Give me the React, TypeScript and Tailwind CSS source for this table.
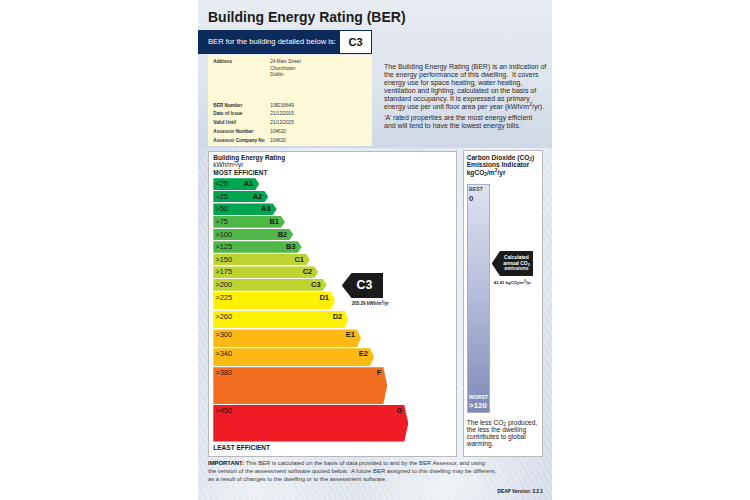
import React from 'react';

type Band = { label: string; code: string; w: number; h: string; bg: string };

const bands: Band[] = [
  { label: '<25', code: 'A1', w: 46, h: 'h-[11.6px]', bg: 'bg-[#00a54f]' },
  { label: '>25', code: 'A2', w: 55, h: 'h-[11.6px]', bg: 'bg-[#00a54f]' },
  { label: '>50', code: 'A3', w: 63.4, h: 'h-[11.6px]', bg: 'bg-[#00a54f]' },
  { label: '>75', code: 'B1', w: 71.7, h: 'h-[11.6px]', bg: 'bg-[#50b848]' },
  { label: '>100', code: 'B2', w: 80, h: 'h-[11.6px]', bg: 'bg-[#50b848]' },
  { label: '>125', code: 'B3', w: 88.4, h: 'h-[11.6px]', bg: 'bg-[#50b848]' },
  { label: '>150', code: 'C1', w: 96.7, h: 'h-[11.6px]', bg: 'bg-[#bdd431]' },
  { label: '>175', code: 'C2', w: 105, h: 'h-[11.6px]', bg: 'bg-[#bdd431]' },
  { label: '>200', code: 'C3', w: 113.4, h: 'h-[11.6px]', bg: 'bg-[#bdd431]' },
  { label: '>225', code: 'D1', w: 121.7, h: 'h-[17.9px]', bg: 'bg-[#fff100]' },
  { label: '>260', code: 'D2', w: 135, h: 'h-[17.9px]', bg: 'bg-[#fff100]' },
  { label: '>300', code: 'E1', w: 147.7, h: 'h-[17.9px]', bg: 'bg-[#fdb913]' },
  { label: '>340', code: 'E2', w: 160.7, h: 'h-[17.9px]', bg: 'bg-[#fdb913]' },
  { label: '>380', code: 'F', w: 174, h: 'h-[36.7px]', bg: 'bg-[#f26f22]' },
  { label: '>450', code: 'G', w: 195, h: 'h-[36.7px]', bg: 'bg-[#ed1c24]' },
];

function Bar({ b }: { b: Band }) {
  return (
    <div
      className={`flex shrink-0 items-start justify-between pl-[2px] pr-[6px] text-[7.5px] leading-[11.6px] text-[#1a1a1a] [clip-path:polygon(0_0,calc(100%_-_4px)_0,100%_50%,calc(100%_-_4px)_100%,0_100%)] ${b.bg} ${b.h}`}
      style={{ width: b.w }}
    >
      <span>{b.label}</span>
      <span className="font-bold">{b.code}</span>
    </div>
  );
}

const infoRows: [string, string][] = [
  ['BER Number', '108216649'],
  ['Date of Issue', '21/12/2015'],
  ['Valid Until', '21/12/2025'],
  ['Assessor Number', '104620'],
  ['Assessor Company No', '104620'],
];

export default function App() {
  return (
    <div className="w-[750px] h-[500px] bg-white flex justify-center font-['Liberation_Sans',Arial,sans-serif] text-[#222]">
      <div className="w-[354px] h-[500px] flex flex-col">
        {/* top section */}
        <div className="h-[148px] flex flex-col [background-image:linear-gradient(180deg,#e7ebf2_0%,#dfe5ee_55%,#cfd8e6_100%)]">
          <h1 className="pl-[10px] pt-[9px] text-[14px] leading-[17px] font-bold text-[#1c1c1c] whitespace-nowrap">
            Building Energy Rating (BER)
          </h1>
          <div className="flex mt-[4px]">
            <div className="w-[174px] flex flex-col">
              <div className="h-[24px] bg-[#0c2b5b] flex items-center justify-between pl-[10px] pr-[1px]">
                <span className="text-white text-[7.6px] whitespace-nowrap">BER for the building detailed below is:</span>
                <div className="w-[31px] h-[22px] bg-white flex items-center justify-center text-[11px] font-bold text-[#111]">
                  C3
                </div>
              </div>
              <div className="ml-[10px] mt-[1px] h-[91px] bg-[#fdf8d6] pl-[5.3px] pt-[4px] text-[4.7px] text-[#333]">
                <div className="flex">
                  <div className="w-[57px] font-bold leading-[6.5px]">Address</div>
                  <div className="leading-[6.5px]">
                    24 Main Street
                    <br />
                    Churchtown
                    <br />
                    Dublin
                  </div>
                </div>
                <div className="mt-[23.1px] flex flex-col">
                  {infoRows.map(([k, v]) => (
                    <div key={k} className="flex leading-[8.75px]">
                      <div className="w-[57px] font-bold whitespace-nowrap">{k}</div>
                      <div>{v}</div>
                    </div>
                  ))}
                </div>
              </div>
            </div>
            <div className="flex-1 pl-[12px] pt-[33px] text-[7px] leading-[8px] text-[#2a2a2a] whitespace-nowrap">
              <p>
                The Building Energy Rating (BER) is an indication of
                <br />
                the energy performance of this dwelling.&nbsp; It covers
                <br />
                energy use for space heating, water heating,
                <br />
                ventilation and lighting, calculated on the basis of
                <br />
                standard occupancy. It is expressed as primary
                <br />
                energy use per unit floor area per year (kWh/m<sup>2</sup>/yr).
              </p>
              <p className="mt-[3px]">
                ‘A’ rated properties are the most energy efficient
                <br />
                and will tend to have the lowest energy bills.
              </p>
            </div>
          </div>
        </div>

        {/* lower section */}
        <div className="flex-1 flex flex-col pl-[10px] pr-[9px] pt-[2px] [background-image:repeating-linear-gradient(62deg,rgba(255,255,255,0.35)_0px,rgba(255,255,255,0.35)_1px,transparent_1px,transparent_5px),linear-gradient(100deg,#d3dae7_0%,#eceff5_28%,#dde3ed_52%,#eef1f6_74%,#d4dbe8_100%)]">
          <div className="flex items-start gap-[6px]">
            {/* energy panel */}
            <div className="w-[249px] h-[305.5px] mt-[1px] bg-white border border-[#b9b9b9] pl-[4.3px] pt-[1.5px] flex flex-col">
              <div className="text-[6.5px] leading-[7.5px] text-[#1a1a1a]">
                <div className="font-bold">Building Energy Rating</div>
                <div>
                  kWh/m<sup>2</sup>/yr
                </div>
                <div className="font-bold">MOST EFFICIENT</div>
              </div>
              <div className="mt-[2.3px] flex flex-col gap-[1px]">
                {bands.map((b) =>
                  b.code === 'C3' ? (
                    <div key={b.code} className="flex items-start h-[11.6px]">
                      <Bar b={b} />
                      <div className="ml-[15px] -mt-[6.4px] flex flex-col shrink-0">
                        <div className="w-[41.6px] h-[25.6px] bg-[#1b1b1b] flex items-center justify-center pl-[4px] text-white text-[12.3px] font-bold [clip-path:polygon(10px_0,100%_0,100%_100%,10px_100%,0_50%)]">
                          C3
                        </div>
                        <div className="pl-[10px] mt-[2.5px] text-[4.5px] leading-[5px] font-bold text-[#222] whitespace-nowrap">
                          205.29 kWh/m<sup>2</sup>/yr
                        </div>
                      </div>
                    </div>
                  ) : (
                    <Bar key={b.code} b={b} />
                  )
                )}
              </div>
              <div className="mt-[2.85px] text-[6.5px] leading-[7.5px] font-bold text-[#1a1a1a]">LEAST EFFICIENT</div>
            </div>

            {/* CO2 panel */}
            <div className="w-[80px] h-[306.5px] bg-white border border-[#b9b9b9] pl-[2.7px] pt-[2.5px] flex flex-col">
              <div className="text-[6.6px] leading-[7.5px] font-bold text-[#1a1a1a] whitespace-nowrap">
                <div>
                  Carbon Dioxide (CO<sub>2</sub>)
                </div>
                <div>Emissions Indicator</div>
                <div>
                  kgCO<sub>2</sub>/m<sup>2</sup>/yr
                </div>
              </div>
              <div className="mt-[8.3px] flex items-start">
                <div className="w-[23.3px] h-[229px] border border-[#a9aec8] [background-image:linear-gradient(180deg,#dfe2f1_0%,#b9bfdb_45%,#7e89b6_100%)] flex flex-col justify-between pl-[1.3px] pt-[0.7px] pb-[2px]">
                  <div>
                    <div className="text-[5.2px] leading-[6px] font-bold text-[#4a4a4a]">BEST</div>
                    <div className="mt-[2px] text-[8px] leading-[9px] font-bold text-[#333]">0</div>
                  </div>
                  <div>
                    <div className="text-[5.2px] leading-[6px] font-bold text-white">WORST</div>
                    <div className="mt-[1.5px] text-[8px] leading-[9px] font-bold text-white">&gt;120</div>
                  </div>
                </div>
                <div className="ml-[1.7px] mt-[66.7px] flex flex-col">
                  <div className="w-[41.6px] h-[25px] bg-[#1b1b1b] flex flex-col items-center justify-center pl-[8px] text-white text-[4.9px] leading-[5.6px] font-bold [clip-path:polygon(8.3px_0,100%_0,100%_100%,8.3px_100%,0_50%)]">
                    <span>Calculated</span>
                    <span>
                      annual CO<sub>2</sub>
                    </span>
                    <span>emissions</span>
                  </div>
                  <div className="pl-[2px] mt-[4px] text-[4.3px] leading-[5px] font-bold text-[#222] whitespace-nowrap">
                    43.41 kgCO<sub>2</sub>/m<sup>2</sup>/yr
                  </div>
                </div>
              </div>
              <div className="mt-[6.5px] text-[6.6px] leading-[6.9px] text-[#1a1a1a] whitespace-nowrap">
                The less CO<sub>2</sub> produced,
                <br />
                the less the dwelling
                <br />
                contributes to global
                <br />
                warming.
              </div>
            </div>
          </div>

          <div className="mt-[2.8px] text-[5.9px] leading-[8px] text-[#3a3a3a] whitespace-nowrap">
            <span className="font-bold text-[#111]">IMPORTANT:</span> This BER is calculated on the basis of data provided to and by the BER Assessor, and using
            <br />
            the version of the assessment software quoted below.&nbsp; A future BER assigned to this dwelling may be different,
            <br />
            as a result of changes to the dwelling or to the assessment software.
          </div>
          <div className="mt-[5.4px] text-right text-[4.8px] leading-[6px] font-bold text-[#111]">DEAP Version: 3.2.1</div>
        </div>
      </div>
    </div>
  );
}
